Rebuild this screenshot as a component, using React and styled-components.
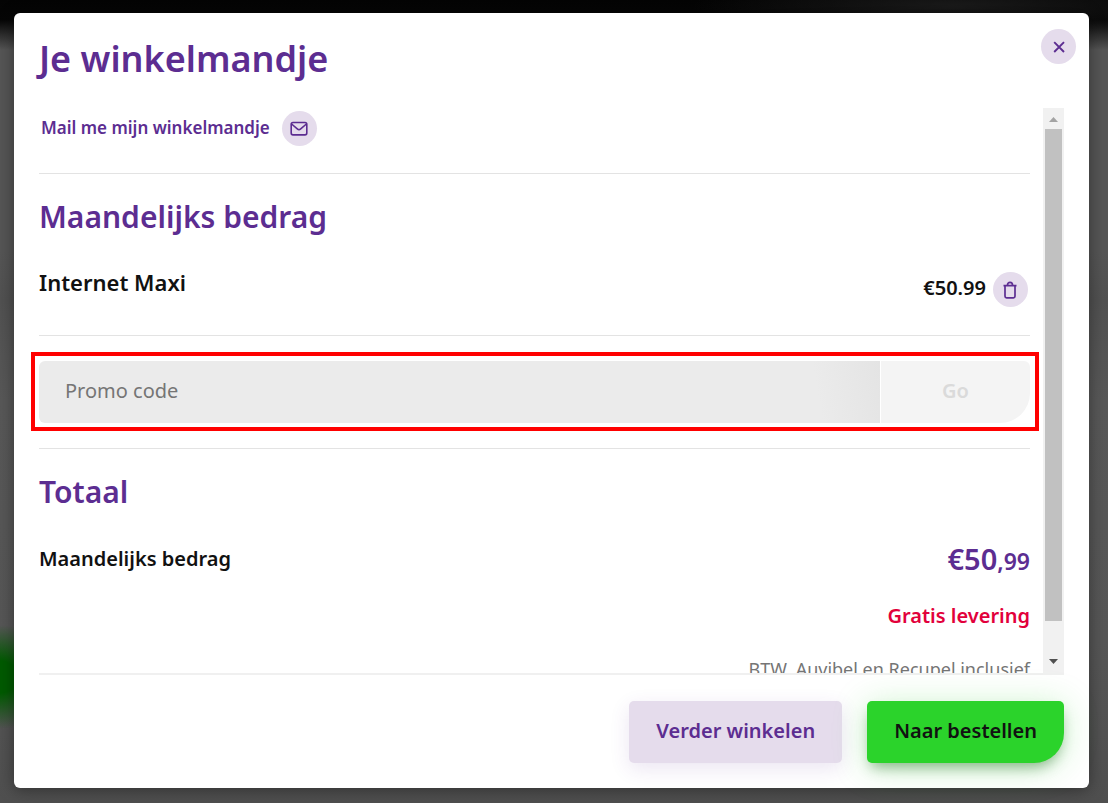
import React from 'react'
import styled, { createGlobalStyle } from 'styled-components';

const GlobalStyle = createGlobalStyle`
  * {
    box-sizing: border-box;
  }

  body {
    margin: 0;
    font-family: "Noto Sans", "Open Sans", sans-serif;
    color: #111;
  }

  button, input {
    font-family: inherit;
  }
`;

const Backdrop = styled.div`
  display: flex;
  height: 100vh;
  padding: 13px 19px 15px 14px;
  background:
    radial-gradient(ellipse 60px 52px at 0 677px, #005a00 30%, transparent 100%),
    radial-gradient(ellipse 260px 30px at 86% 6px, #1a1a1a, transparent 100%),
    linear-gradient(#040404 0, #060606 20px, #555 50px, #555 250px, #515151 300px, #585858 400px, #565656 640px, #4f4f4f 100%);
`;

const Dialog = styled.main`
  display: flex;
  flex-direction: column;
  flex: 1;
  min-width: 0;
  padding: 0 25px;
  border-radius: 6px;
  background: #fff;
  box-shadow: 0 2px 16px rgba(0, 0, 0, 0.4);
`;

const Header = styled.header`
  display: flex;
  justify-content: space-between;
  align-items: flex-start;
  height: 95px;
  padding-top: 16px;
  margin-right: -12px;
  flex-shrink: 0;
`;

const Title = styled.h1`
  margin: 0;
  font-size: 36px;
  line-height: 60px;
  font-weight: 600;
  color: #5c2d91;
`;

const IconButton = styled.button`
  display: flex;
  align-items: center;
  justify-content: center;
  flex-shrink: 0;
  width: 35px;
  height: 35px;
  padding: 0;
  border: 0;
  border-radius: 50%;
  background: #e5dcec;
  color: #5c2d91;
  cursor: pointer;
`;

const Body = styled.div`
  display: flex;
  flex: 1;
  min-height: 0;
  margin-left: -8px;
`;

const Scroller = styled.div`
  flex: 1;
  min-width: 0;
  padding: 0 13px 0 8px;
  overflow-y: auto;
  scrollbar-width: none;
`;

const Scrollbar = styled.div`
  display: flex;
  flex-direction: column;
  width: 21px;
  background: #f1f1f1;
`;

const ScrollArrow = styled.svg`
  flex-shrink: 0;
  width: 21px;
  height: 21px;
  fill: ${(props => props.$color)};
`;

const ScrollTrack = styled.div`
  flex: 1;
  padding: 0 2px;
`;

const ScrollThumb = styled.div`
  height: 94%;
  background: #c1c1c1;
`;

const MailRow = styled.div`
  display: flex;
  align-items: flex-start;
  gap: 12px;
  padding: 3px 2px 27px;
  border-bottom: 1px solid #e3e3e3;
`;

const MailLink = styled.a`
  font-size: 17px;
  line-height: 33px;
  font-weight: 600;
  color: #5c2d91;
  text-decoration: none;
`;

const Section = styled.section`
  padding: 22px 0 28px;
  border-bottom: ${(props => props.$last ? '0' : '1px solid #e3e3e3')};
`;

const SectionTitle = styled.h2`
  margin: 0 0 28px;
  font-size: 30px;
  line-height: 42px;
  font-weight: 600;
  color: #5c2d91;
`;

const Row = styled.div`
  display: flex;
  justify-content: space-between;
  align-items: flex-start;
`;

const ProductName = styled.h3`
  margin: 0;
  font-size: 22px;
  line-height: 32px;
  font-weight: 600;
`;

const ProductPrice = styled.div`
  display: flex;
  gap: 7px;
  padding: 6px 2px 0 0;
  font-size: 20px;
  line-height: 31px;
  font-weight: 600;
`;

const PromoArea = styled.div`
  padding: 16px 0 17px;
  border-bottom: 1px solid #e3e3e3;
`;

const PromoFrame = styled.div`
  margin: 0 -9px 0 -8px;
  padding: 5px 5px 4px 4px;
  border: 4px solid #f00;
`;

const PromoForm = styled.form`
  display: flex;
  gap: 1px;
`;

const PromoInput = styled.input`
  flex: 1;
  min-width: 0;
  height: 62px;
  padding: 0 26px 3px;
  border: 0;
  border-radius: 6px 0 0 6px;
  background: linear-gradient(80deg, #ebebeb 92%, #e4e4e4);
  font-size: 20px;

  &::placeholder {
    color: #757575;
    opacity: 1;
  }
`;

const PromoButton = styled.button`
  width: 149px;
  padding: 0 0 3px;
  border: 0;
  border-radius: 0 6px 30px 0;
  background: #f4f4f4;
  color: #dadada;
  font-size: 20px;
  font-weight: 600;
`;

const TotalLabel = styled.div`
  font-size: 20px;
  line-height: 36px;
  font-weight: 600;
`;

const TotalPrice = styled.div`
  font-size: 29px;
  line-height: 36px;
  font-weight: 600;
  color: #5c2d91;
`;

const Cents = styled.span`
  font-size: 23px;
`;

const Delivery = styled.div`
  margin-top: 21px;
  font-size: 20px;
  line-height: 32px;
  font-weight: 600;
  text-align: right;
  color: #e2003b;
`;

const Note = styled.div`
  margin-top: 21px;
  font-size: 18px;
  line-height: 32px;
  text-align: right;
  color: #757575;
`;

const Footer = styled.footer`
  display: flex;
  justify-content: flex-end;
  gap: 25px;
  flex-shrink: 0;
  padding: 26px 0 25px;
  border-top: 2px solid #f0f0f0;
`;

const ActionButton = styled.button`
  height: 62px;
  padding: 0 27px 3px;
  border: 0;
  border-radius: ${(props => props.$primary ? '5px 5px 30px 5px' : '5px')};
  background: ${(props => props.$primary ? '#2bd32b' : '#e5dcec')};
  color: ${(props => props.$primary ? '#111' : '#5c2d91')};
  box-shadow: ${(props => props.$primary
    ? '0 8px 14px -4px rgba(0, 80, 0, 0.4), 0 4px 34px rgba(43, 211, 43, 0.25)'
    : '0 6px 20px rgba(92, 45, 145, 0.12)')};
  font-size: 20px;
  font-weight: 600;
  cursor: pointer;
`;

const CloseIcon = () => (
  <svg width="12" height="12" viewBox="0 0 12 12" fill="none" stroke="currentColor" strokeWidth="1.9">
    <path d="M1.2 1.2l9.8 9.8M11 1.2L1.2 11" />
  </svg>
)

const MailIcon = () => (
  <svg width="18" height="16" viewBox="0 0 18 16" fill="none" stroke="currentColor" strokeWidth="1.6">
    <rect x="1.2" y="1.5" width="15.6" height="12.4" rx="1.8" />
    <path d="M1.6 3l5.7 4.9a2.6 2.6 0 0 0 3.4 0L16.4 3" />
  </svg>
)

const TrashIcon = () => (
  <svg width="15" height="18" viewBox="0 0 15 18" fill="none" stroke="currentColor" strokeWidth="1.7">
    <path d="M0.5 4.6h13M2 4.6v10.6c0 1 .6 1.6 1.6 1.6h6.8c1 0 1.6-.6 1.6-1.6V4.6M4.4 4.4c0-4 5.2-4 5.2 0" />
  </svg>
)

const App = () => {
  return (
    <>
      <GlobalStyle />
      <Backdrop>
        <Dialog>
          <Header>
            <Title>Je winkelmandje</Title>
            <IconButton aria-label="Sluiten"><CloseIcon /></IconButton>
          </Header>
          <Body>
            <Scroller>
              <MailRow>
                <MailLink href="#mail">Mail me mijn winkelmandje</MailLink>
                <IconButton aria-label="Mail"><MailIcon /></IconButton>
              </MailRow>
              <Section>
                <SectionTitle>Maandelijks bedrag</SectionTitle>
                <Row>
                  <ProductName>Internet Maxi</ProductName>
                  <ProductPrice>
                    €50.99
                    <IconButton aria-label="Verwijderen"><TrashIcon /></IconButton>
                  </ProductPrice>
                </Row>
              </Section>
              <PromoArea>
                <PromoFrame>
                  <PromoForm>
                    <PromoInput type="text" placeholder="Promo code" aria-label="Promo code" />
                    <PromoButton type="submit" disabled>Go</PromoButton>
                  </PromoForm>
                </PromoFrame>
              </PromoArea>
              <Section $last>
                <SectionTitle>Totaal</SectionTitle>
                <Row>
                  <TotalLabel>Maandelijks bedrag</TotalLabel>
                  <TotalPrice>€50<Cents>,99</Cents></TotalPrice>
                </Row>
                <Delivery>Gratis levering</Delivery>
                <Note>BTW, Auvibel en Recupel inclusief</Note>
              </Section>
            </Scroller>
            <Scrollbar>
              <ScrollArrow $color="#a3a3a3" viewBox="0 0 21 21"><path d="M6 14h9l-4.5-5z" /></ScrollArrow>
              <ScrollTrack><ScrollThumb /></ScrollTrack>
              <ScrollArrow $color="#505050" viewBox="0 0 21 21"><path d="M6 7h9l-4.5 5z" /></ScrollArrow>
            </Scrollbar>
          </Body>
          <Footer>
            <ActionButton>Verder winkelen</ActionButton>
            <ActionButton $primary>Naar bestellen</ActionButton>
          </Footer>
        </Dialog>
      </Backdrop>
    </>
  )
}

export default App;
